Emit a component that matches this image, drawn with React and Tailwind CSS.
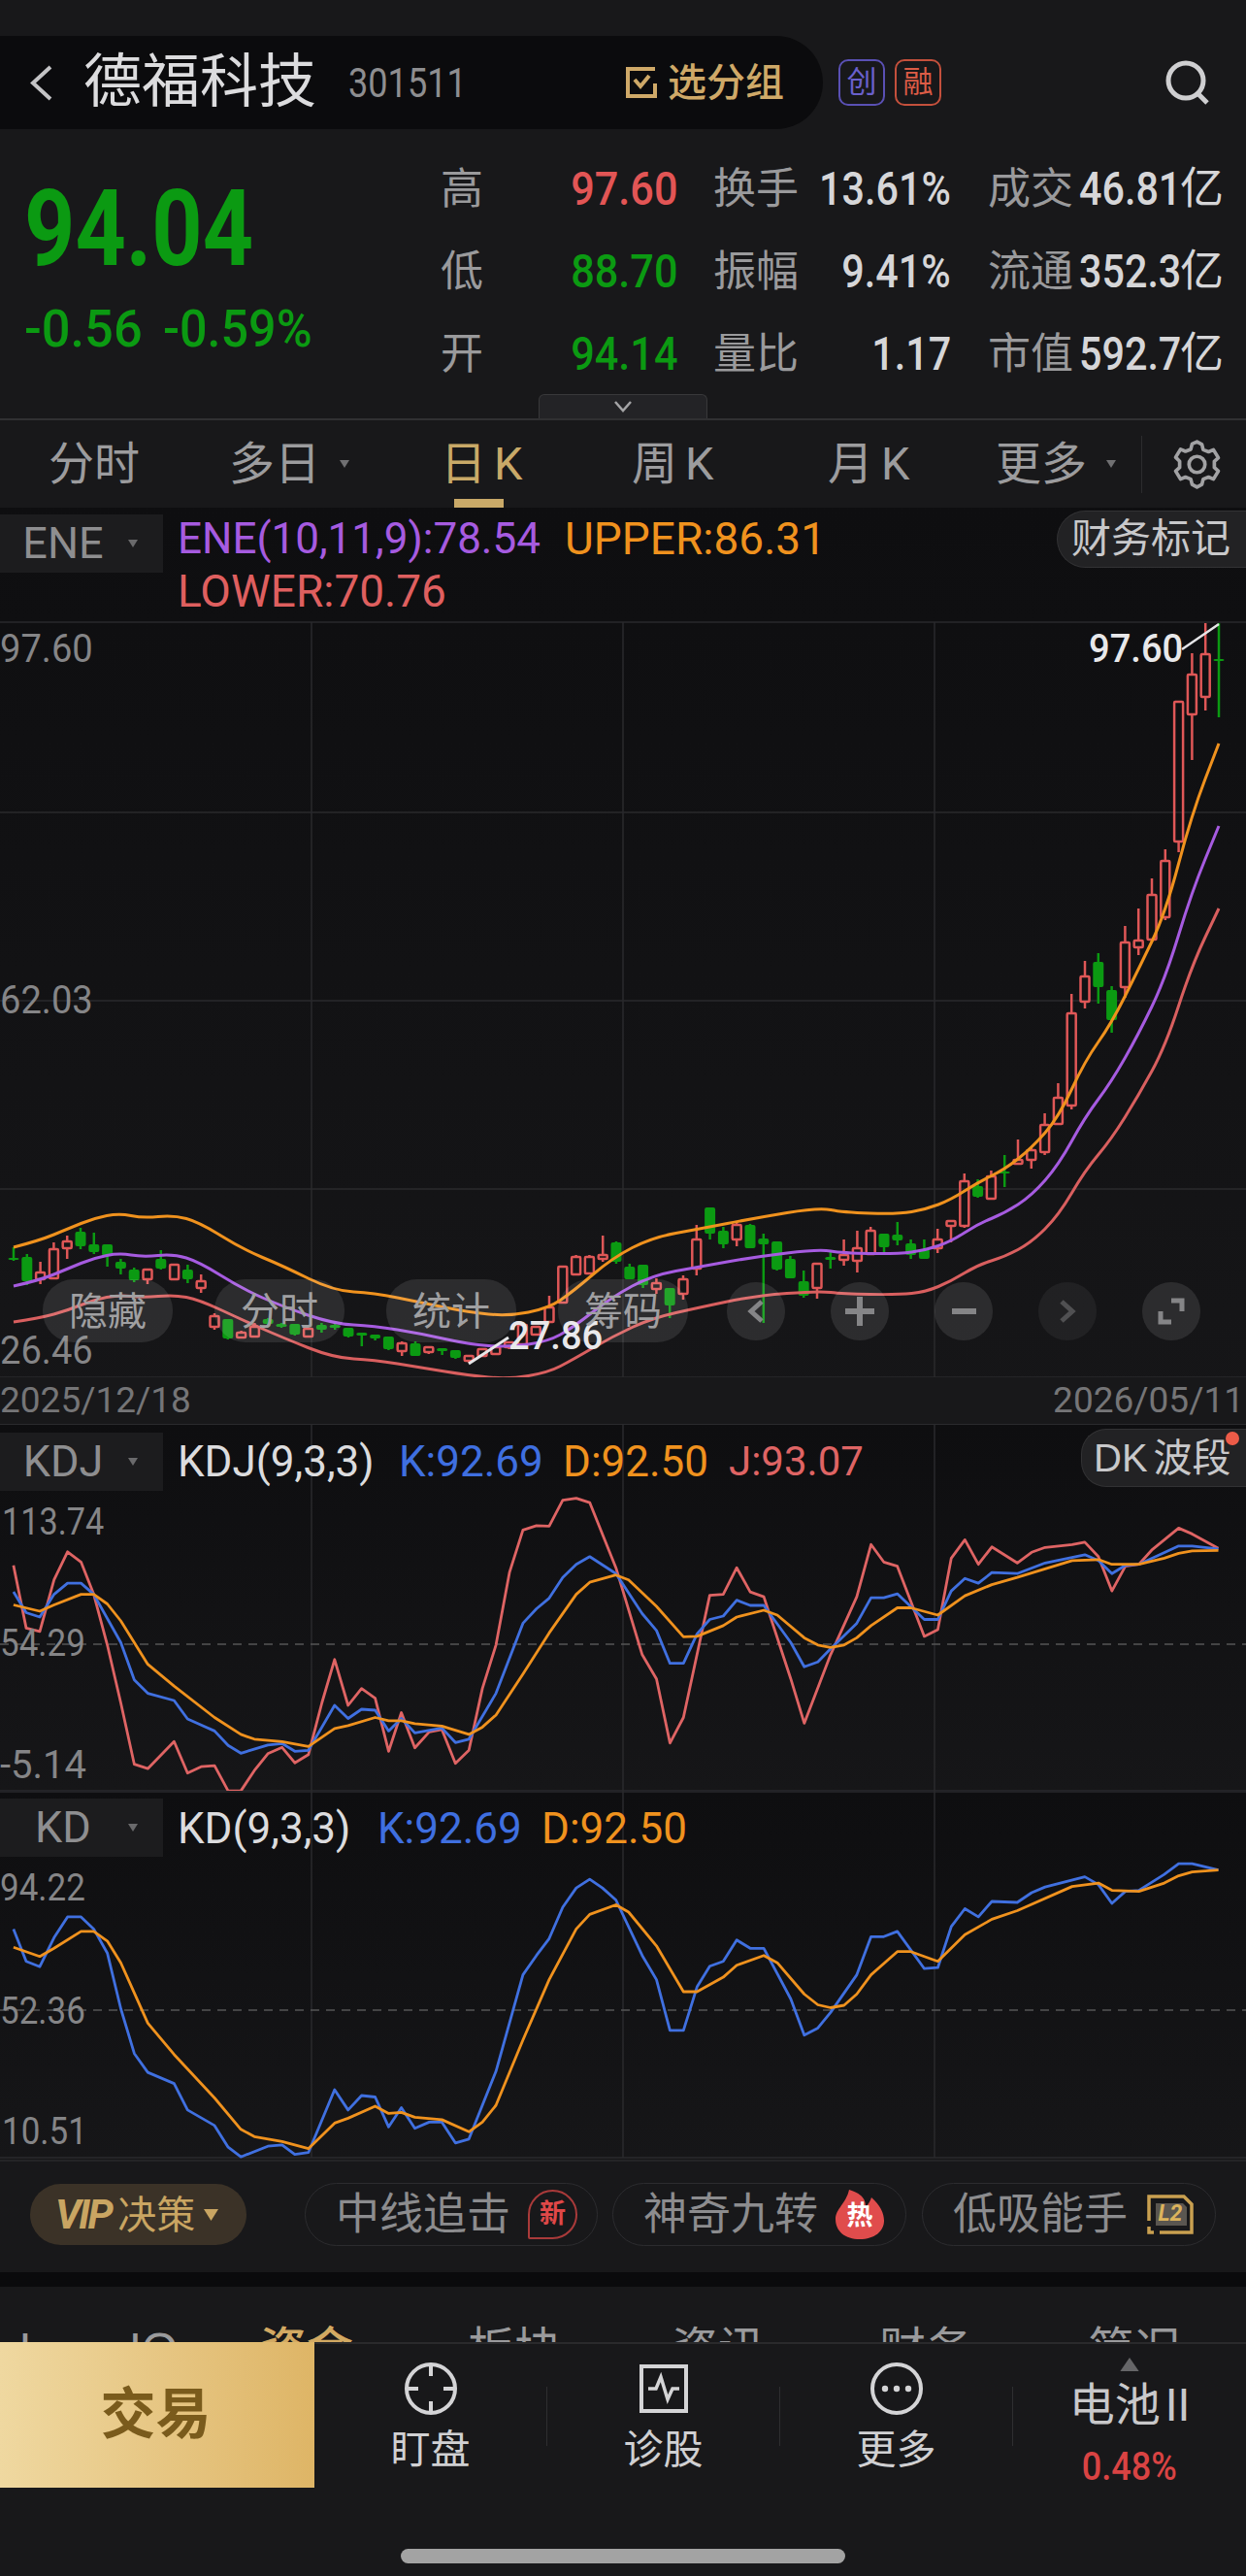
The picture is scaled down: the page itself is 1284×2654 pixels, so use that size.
import React from 'react';

const ROBOTO = "font-['Roboto','Liberation_Sans',sans-serif]";

// [high, bodyTop, bodyBottom, low, colour] in page pixels
const candles = [
  [1285,1296,1298,1299,'g'],[1292,1295,1320,1324,'g'],[1300,1311,1318,1323,'r'],[1280,1287,1317,1318,'r'],
  [1273,1279,1286,1297,'r'],[1265,1269,1284,1287,'g'],[1270,1282,1290,1292,'g'],[1282,1282,1294,1305,'g'],
  [1297,1300,1307,1313,'g'],[1306,1308,1319,1321,'g'],[1307,1308,1318,1323,'r'],[1288,1297,1307,1308,'g'],
  [1302,1303,1318,1319,'r'],[1303,1308,1318,1322,'g'],[1313,1320,1327,1332,'r'],[1353,1356,1367,1370,'r'],
  [1359,1359,1379,1380,'g'],[1371,1373,1378,1379,'r'],[1363,1367,1377,1378,'r'],[1358,1359,1364,1365,'g'],
  [1363,1364,1367,1368,'g'],[1364,1364,1375,1376,'g'],[1368,1369,1377,1378,'r'],[1363,1365,1370,1373,'g'],
  [1364,1365,1368,1370,'g'],[1368,1368,1377,1378,'g'],[1373,1373,1376,1387,'g'],[1375,1375,1379,1381,'g'],
  [1377,1377,1390,1391,'g'],[1382,1384,1392,1397,'r'],[1382,1384,1397,1397,'g'],[1388,1388,1393,1395,'r'],
  [1389,1389,1392,1396,'g'],[1391,1391,1399,1400,'g'],[1397,1397,1402,1404,'r'],[1390,1390,1397,1398,'r'],
  [1388,1388,1395,1396,'r'],[1383,1383,1388,1390,'r'],[1365,1365,1385,1386,'r'],[1367,1367,1375,1376,'r'],
  [1335,1347,1362,1363,'r'],[1305,1305,1342,1343,'r'],[1293,1295,1313,1314,'r'],[1293,1295,1312,1313,'r'],
  [1273,1293,1297,1300,'r'],[1279,1280,1300,1302,'g'],[1302,1305,1318,1318,'g'],[1303,1303,1324,1327,'g'],
  [1317,1322,1328,1333,'r'],[1327,1327,1345,1358,'g'],[1314,1318,1333,1339,'r'],[1262,1277,1307,1314,'r'],
  [1244,1244,1271,1277,'g'],[1264,1268,1282,1286,'g'],[1258,1262,1277,1284,'r'],[1261,1262,1286,1286,'g'],
  [1271,1276,1282,1363,'g'],[1279,1279,1308,1309,'g'],[1294,1297,1317,1317,'g'],[1309,1320,1335,1337,'g'],
  [1302,1302,1327,1338,'r'],[1290,1295,1298,1307,'g'],[1277,1293,1298,1304,'r'],[1268,1286,1299,1311,'r'],
  [1264,1268,1292,1292,'r'],[1271,1271,1285,1291,'g'],[1259,1272,1278,1283,'g'],[1277,1281,1293,1297,'g'],
  [1277,1287,1297,1297,'g'],[1266,1277,1286,1291,'r'],[1258,1258,1263,1280,'r'],[1209,1217,1263,1265,'r'],
  [1215,1222,1233,1234,'g'],[1206,1212,1235,1235,'r'],[1190,1207,1209,1223,'g'],[1174,1195,1199,1199,'r'],
  [1182,1185,1195,1204,'r'],[1147,1159,1187,1190,'r'],[1116,1131,1158,1159,'r'],[1024,1044,1139,1143,'r'],
  [990,1006,1032,1039,'r'],[982,991,1017,1034,'g'],[1016,1020,1051,1064,'g'],[954,971,1017,1028,'r'],
  [936,969,976,984,'r'],[905,922,968,970,'r'],[875,887,945,948,'r'],[723,723,867,878,'r'],
  [673,695,736,783,'r'],[642,674,718,732,'r'],[642,679,681,739,'g'],
];

const upper = [[14,1285],[41,1278],[70,1266],[97,1255],[123,1250],[147,1255],[179,1252],[205,1259],[250,1287],[291,1304],[344,1330],[385,1332],[434,1342],[483,1352],[524,1356],[565,1348],[590,1331],[631,1296],[672,1275],[721,1266],[778,1255],[844,1244],[868,1249],[925,1251],[954,1246],[980,1236],[1008,1218],[1035,1205],[1063,1183],[1091,1151],[1118,1093],[1145,1055],[1173,999],[1201,941],[1228,839],[1256,766]];
const mid = [[14,1325],[41,1319],[70,1307],[97,1296],[123,1291],[147,1295],[179,1292],[205,1300],[250,1328],[291,1346],[344,1364],[385,1366],[434,1374],[483,1385],[524,1388],[565,1382],[590,1368],[631,1336],[672,1314],[721,1305],[778,1295],[844,1287],[868,1291],[925,1292],[954,1288],[980,1279],[1008,1261],[1035,1250],[1063,1232],[1091,1200],[1118,1151],[1145,1115],[1173,1066],[1201,1008],[1228,919],[1256,851]];
const lower = [[14,1362],[41,1358],[70,1350],[97,1339],[123,1334],[147,1337],[179,1334],[205,1339],[250,1360],[291,1378],[344,1399],[385,1401],[434,1409],[483,1417],[524,1421],[565,1414],[590,1401],[631,1377],[672,1358],[721,1347],[778,1335],[844,1330],[868,1333],[925,1334],[954,1331],[980,1320],[1008,1303],[1035,1295],[1063,1280],[1091,1252],[1118,1206],[1145,1174],[1173,1129],[1201,1078],[1228,995],[1256,936]];

// read off the 1284 -> 1568 crop, turned into page pixels by toPage
const jLine = [[17,305],[33,435],[50,442],[68,335],[85,277],[102,298],[118,365],[135,470],[152,590],[169,717],[186,726],[219,670],[236,735],[253,722],[270,720],[287,772],[303,772],[320,730],[337,695],[355,682],[371,714],[388,697],[405,590],[421,500],[438,595],[455,560],[472,580],[489,690],[505,610],[522,683],[540,650],[556,645],[573,715],[590,688],[607,560],[624,470],[641,320],[658,232],[675,223],[691,224],[708,170],[725,166],[742,175],[775,310],[808,490],[826,540],[843,673],[860,620],[893,367],[910,365],[927,310],[944,360],[961,370],[995,540],[1012,632],[1045,490],[1078,370],[1096,262],[1112,298],[1129,307],[1163,452],[1180,438],[1197,290],[1214,252],[1231,303],[1248,267],[1280,300],[1298,278],[1315,268],[1349,262],[1365,257],[1382,287],[1399,358],[1416,307],[1433,303],[1450,272],[1483,228],[1500,240],[1533,270]];
const kLine = [[17,360],[33,403],[50,412],[68,365],[85,342],[102,342],[118,365],[152,465],[169,542],[186,570],[219,585],[236,623],[270,648],[287,678],[303,694],[337,677],[355,674],[371,690],[388,688],[421,595],[438,622],[455,603],[472,605],[489,648],[505,622],[522,652],[556,642],[573,672],[590,665],[624,570],[658,425],[675,395],[691,373],[708,330],[725,303],[742,287],[775,322],[808,405],[826,440],[843,508],[860,508],[877,447],[893,417],[910,410],[927,377],[944,388],[961,388],[995,465],[1012,515],[1029,505],[1045,478],[1078,425],[1096,372],[1112,372],[1129,364],[1163,417],[1180,417],[1197,358],[1214,332],[1231,342],[1248,320],[1280,322],[1315,300],[1365,283],[1382,295],[1399,322],[1416,305],[1433,303],[1483,265],[1500,265],[1533,271]];
const dLine = [[17,387],[50,400],[68,387],[102,365],[118,365],[135,385],[152,420],[186,510],[219,555],[270,620],[303,655],[320,665],[355,670],[388,680],[421,643],[438,637],[472,620],[489,627],[505,627],[522,633],[556,638],[590,655],[607,640],[624,615],[658,530],[691,445],[725,365],[742,340],[775,325],[791,335],[826,390],[860,453],[877,452],[910,430],[927,412],[961,398],[978,408],[1012,455],[1029,470],[1045,475],[1062,470],[1078,455],[1096,430],[1129,393],[1146,393],[1180,408],[1214,368],[1248,345],[1280,330],[1349,295],[1382,293],[1399,303],[1433,303],[1465,290],[1483,280],[1500,275],[1533,274]];
const k2Line = [[17,1060],[33,1127],[50,1138],[68,1078],[85,1035],[102,1035],[118,1060],[135,1110],[152,1225],[169,1318],[186,1357],[219,1380],[236,1435],[270,1467],[287,1512],[303,1532],[337,1510],[355,1507],[371,1527],[388,1523],[421,1393],[438,1435],[455,1405],[472,1408],[489,1470],[505,1430],[522,1473],[540,1460],[556,1460],[573,1503],[590,1495],[624,1355],[658,1155],[675,1115],[691,1080],[708,1015],[725,975],[742,957],[758,975],[775,1000],[808,1115],[826,1165],[843,1270],[860,1270],[877,1180],[893,1137],[910,1127],[927,1083],[944,1100],[961,1100],[995,1205],[1012,1280],[1029,1265],[1045,1233],[1078,1155],[1096,1076],[1112,1076],[1129,1065],[1163,1142],[1180,1140],[1197,1055],[1214,1018],[1231,1035],[1248,1003],[1280,1005],[1298,985],[1315,973],[1365,952],[1382,968],[1399,1007],[1416,982],[1433,980],[1465,947],[1483,925],[1500,925],[1533,938]];
const d2Line = [[17,1098],[50,1117],[68,1100],[102,1065],[118,1065],[135,1085],[152,1130],[186,1255],[219,1320],[270,1410],[303,1475],[320,1490],[355,1500],[388,1515],[421,1462],[438,1452],[472,1427],[489,1442],[505,1440],[522,1450],[556,1455],[590,1480],[607,1460],[624,1425],[658,1290],[691,1165],[725,1060],[742,1030],[775,1010],[791,1025],[826,1095],[860,1190],[877,1190],[910,1160],[927,1135],[961,1115],[978,1130],[1012,1195],[1029,1217],[1045,1223],[1062,1218],[1078,1195],[1096,1155],[1129,1107],[1146,1107],[1180,1127],[1214,1072],[1248,1040],[1280,1022],[1349,972],[1382,965],[1399,980],[1433,982],[1465,965],[1483,950],[1500,942],[1533,938]];

const toPage = (pts) => pts.map(([x, y]) => [x / 1.221, 1460 + y / 2.01]);
const poly = (pts) => pts.map((p) => p.map((n) => n.toFixed(1)).join(',')).join(' ');
const smooth = (pts) => {
  let d = `M${pts[0][0]} ${pts[0][1]}`;
  for (let i = 1; i < pts.length - 1; i++) {
    const mx = (pts[i][0] + pts[i + 1][0]) / 2;
    const my = (pts[i][1] + pts[i + 1][1]) / 2;
    d += ` Q${pts[i][0]} ${pts[i][1]} ${mx} ${my}`;
  }
  const last = pts[pts.length - 1];
  return d + ` L${last[0]} ${last[1]}`;
};

function Caret({ className = '' }) {
  return (
    <svg viewBox="0 0 10 8" className={`w-[10px] h-[8px] ${className}`}>
      <path d="M0 0H10L5 8Z" fill="currentColor" />
    </svg>
  );
}

function Candle({ c, i }) {
  const [h, t, b, l, col] = c;
  const x = 14 + 13.8 * i;
  if (col === 'g') {
    return (
      <g stroke="#0b9a12" fill="#0b9a12">
        <line x1={x} x2={x} y1={h} y2={l} strokeWidth="2.5" />
        <rect x={x - 5.5} y={t} width="11" height={Math.max(b - t, 2)} rx="2" strokeWidth="0" />
      </g>
    );
  }
  return (
    <g stroke="#df5757" fill="none" strokeWidth="2.5">
      <line x1={x} x2={x} y1={h} y2={t} />
      <line x1={x} x2={x} y1={b} y2={l} />
      <rect x={x - 4.5} y={t} width="9" height={Math.max(b - t, 2)} rx="1" />
    </g>
  );
}

function Grid({ hs = [], top, bottom }) {
  return (
    <g stroke="#2a2a2d" strokeWidth="1.5">
      {hs.map((y) => <line key={y} x1="0" x2="1284" y1={y} y2={y} />)}
      {[321, 642, 963].map((x) => <line key={x} x1={x} x2={x} y1={top} y2={bottom} />)}
    </g>
  );
}

function IndicatorTab({ name }) {
  return (
    <div className="w-[168px] h-[60px] bg-[#1c1c1e] flex items-center shrink-0">
      <span className={`w-[130px] text-center text-[45px] text-[#8e8e90] ${ROBOTO}`}>{name}</span>
      <Caret className="text-[#6a6a6c] ml-[2px]" />
    </div>
  );
}

function Chip({ label, children, className }) {
  return (
    <div className={`h-[65px] rounded-full border border-[#2c2c2f] flex items-center pl-[31px] text-[45px] text-[#8c8c8e] ${className}`}>
      <span className="w-[199px] shrink-0 whitespace-nowrap">{label}</span>
      {children}
    </div>
  );
}

function NavItem({ label, children }) {
  return (
    <>
      <div className="w-[239px] flex flex-col items-center pt-[19px]">
        <div className="h-[54px] flex items-center justify-center">{children}</div>
        <span className="mt-[14px] text-[41px] leading-[44px] text-[#d0d0d2]">{label}</span>
      </div>
      <div className="w-px h-[61px] mt-[44px] bg-[#2e2e30]" />
    </>
  );
}

export default function App() {
  const stats = [
    ['高', '97.60', 'text-[#e25555]', '换手', '13.61%', '成交', '46.81'],
    ['低', '88.70', 'text-[#0b9a12]', '振幅', '9.41%', '流通', '352.3'],
    ['开', '94.14', 'text-[#0b9a12]', '量比', '1.17', '市值', '592.7'],
  ];
  const tabs = [
    { name: '分时', w: 'w-[186px]' },
    { name: '多日', w: 'w-[218px]', caret: true },
    { w: 'w-[197px]', active: true },
    { name: '周', k: true, w: 'w-[202px]' },
    { name: '月', k: true, w: 'w-[173px]' },
    { name: '更多', w: 'w-[150px]', caret: true },
  ];

  return (
    <div className="w-[1284px] h-[2654px] overflow-hidden bg-[#18181a] text-[#ddd] font-['Liberation_Sans','Noto_Sans_CJK_SC',sans-serif]">
      {/* Title bar */}
      <div className="pt-[37px] flex items-center h-[133px]">
        <div className="w-[848px] h-[96px] bg-[#0b0b0d] rounded-r-[48px] flex items-center shrink-0">
          <svg viewBox="0 0 25 37" className="w-[25px] h-[37px] ml-[30px]" fill="none" stroke="#c4c4c6" strokeWidth="4">
            <path d="M22 2L4 18.5L22 35" />
          </svg>
          <span className="ml-[31px] text-[60px] leading-none text-[#dcdcde]">德福科技</span>
          <span className={`ml-[33px] text-[43px] text-[#8e8e90] inline-block origin-left scale-x-[.84] ${ROBOTO}`}>301511</span>
          <div className="ml-auto mr-[40px] flex items-center text-[#cfa968]">
            <svg viewBox="0 0 32 32" className="w-[32px] h-[32px]" fill="none" stroke="currentColor" strokeWidth="4">
              <path d="M30 2H2V30H30V17" />
              <path d="M9 13L15 20L24 9" />
            </svg>
            <span className="ml-[11px] text-[40px] font-medium">选分组</span>
          </div>
        </div>
        <div className="ml-[16px] w-[48px] h-[48px] rounded-[10px] border-2 border-[#5a50b4] flex items-center justify-center text-[31px] text-[#6a60cc]">创</div>
        <div className="ml-[10px] w-[48px] h-[48px] rounded-[10px] border-2 border-[#c4503c] flex items-center justify-center text-[31px] text-[#dc5c46]">融</div>
        <svg viewBox="0 0 46 46" className="ml-auto mr-[37px] w-[46px] h-[46px]" fill="none" stroke="#cfcfd1" strokeWidth="5">
          <circle cx="21" cy="21" r="18" />
          <path d="M33 34L43 44" />
        </svg>
      </div>

      {/* Quote */}
      <div className="relative h-[300px] flex border-b-2 border-[#303032]">
        <div className="w-[454px] pl-[25px] pt-[48px] shrink-0">
          <div className={`text-[110px] leading-[110px] font-bold text-[#0b9a12] origin-left scale-x-[.83] ${ROBOTO}`}>94.04</div>
          <div className={`mt-[21px] flex text-[54px] leading-[54px] font-medium text-[#0b9a12] ${ROBOTO}`}>
            <span className="w-[143px] origin-left scale-x-[.97]">-0.56</span>
            <span className="origin-left scale-x-[.93]">-0.59%</span>
          </div>
        </div>
        <div className="pt-[19px] grid grid-cols-[136px_108px_148px_134px_132px_120px] auto-rows-[85px] items-center">
          {stats.map((r) => (
            <React.Fragment key={r[0]}>
              <span className="text-[44px] text-[#9a9a9c]">{r[0]}</span>
              <span className={`justify-self-end text-[48px] font-medium whitespace-nowrap origin-right scale-x-[.9] ${r[2]} ${ROBOTO}`}>{r[1]}</span>
              <span className="pl-[37px] text-[44px] text-[#9a9a9c] whitespace-nowrap">{r[3]}</span>
              <span className={`justify-self-end text-[48px] font-medium text-[#d6d6d8] whitespace-nowrap origin-right scale-x-[.86] ${ROBOTO}`}>{r[4]}</span>
              <span className="pl-[38px] text-[44px] text-[#9a9a9c] whitespace-nowrap">{r[5]}</span>
              <span className="flex items-center whitespace-nowrap">
                <span className={`w-[104px] text-[48px] font-medium text-[#d6d6d8] origin-left scale-x-[.86] ${ROBOTO}`}>{r[6]}</span>
                <span className="text-[45px] text-[#d6d6d8]">亿</span>
              </span>
            </React.Fragment>
          ))}
        </div>
        <div className="absolute left-[555px] bottom-0 w-[174px] h-[25px] bg-[#232326] border border-b-0 border-[#38383a] rounded-t-[6px] flex items-center justify-center">
          <svg viewBox="0 0 20 12" className="w-[20px] h-[12px]" fill="none" stroke="#a4a4a6" strokeWidth="2.5">
            <path d="M2 1L10 10L18 1" />
          </svg>
        </div>
      </div>

      {/* Period tabs */}
      <div className="h-[90px] flex items-center pl-[50px] text-[47px] text-[#9c9c9e]">
        {tabs.map((t, i) => (
          <div key={i} className={`${t.w} relative h-full flex items-center shrink-0`}>
            {t.active ? (
              <>
                <span className="text-[#c9a968] whitespace-nowrap">日<span className={`ml-[8px] ${ROBOTO}`}>K</span></span>
                <span className="absolute left-[14px] bottom-0 w-[51px] h-[9px] bg-[#c9a968]" />
              </>
            ) : (
              <span className="whitespace-nowrap">{t.name}{t.k && <span className={`ml-[8px] ${ROBOTO}`}>K</span>}</span>
            )}
            {t.caret && <Caret className="ml-[20px] text-[#707072]" />}
          </div>
        ))}
        <div className="w-px h-[59px] bg-[#2c2c2e] shrink-0" />
        <svg viewBox="0 0 24 24" className="ml-[29px] w-[55px] h-[55px]" fill="none" stroke="#a2a2a4" strokeWidth="1.6" strokeLinejoin="round">
          <path d="M12 1.8l2.2 1.2.6 2.4 2.4.9 2.2-.9 2.2 3.6-1.8 1.6v2.8l1.8 1.6-2.2 3.6-2.2-.9-2.4.9-.6 2.4-2.2 1.2-2.2-1.2-.6-2.4-2.4-.9-2.2.9-2.2-3.6 1.8-1.6v-2.8L2.4 8.8l2.2-3.6 2.2.9 2.4-.9.6-2.4z" />
          <circle cx="12" cy="12" r="3.6" />
        </svg>
      </div>

      {/* Main chart */}
      <div className="relative h-[944px] bg-linear-to-b from-[#0e0e10] to-[#161618] flex flex-col">
        <svg viewBox="0 523 1284 944" className="absolute inset-0 w-[1284px] h-[944px]">
          <Grid hs={[641, 837, 1031, 1225, 1419]} top={641} bottom={1419} />
          {candles.map((c, i) => <Candle key={i} c={c} i={i} />)}
          <path d={smooth(lower)} fill="none" stroke="#d95f5f" strokeWidth="3" />
          <path d={smooth(mid)} fill="none" stroke="#a65be0" strokeWidth="3" />
          <path d={smooth(upper)} fill="none" stroke="#f0921e" strokeWidth="3" />
          <line x1="483" y1="1405" x2="524" y2="1378" stroke="#e6e6e8" strokeWidth="3" />
          <line x1="1218" y1="669" x2="1256" y2="643" stroke="#e6e6e8" strokeWidth="2.5" />
        </svg>

        <div className="relative h-[118px] flex items-start pt-[7px]">
          <IndicatorTab name="ENE" />
          <div className={`ml-[15px] -mt-[2px] leading-[54px] ${ROBOTO}`}>
            <div className="flex whitespace-nowrap">
              <span className="w-[399px] text-[44px] text-[#a65be0]">ENE(10,11,9):78.54</span>
              <span className="text-[46px] text-[#f0921e]">UPPER:86.31</span>
            </div>
            <div className="text-[46px] text-[#df5f5f]">LOWER:70.76</div>
          </div>
          <div className="ml-auto -mt-[4px] w-[195px] h-[59px] bg-[#222224] border border-r-0 border-[#323234] rounded-l-[30px] flex items-center pl-[14px] text-[41px] text-[#c8c8ca] whitespace-nowrap">财务标记</div>
        </div>

        <span className={`absolute left-0 top-[123px] text-[41px] leading-[44px] text-[#858587] origin-left scale-x-[.93] ${ROBOTO}`}>97.60</span>
        <span className={`absolute left-0 top-[485px] text-[41px] leading-[44px] text-[#858587] origin-left scale-x-[.93] ${ROBOTO}`}>62.03</span>
        <span className={`absolute left-0 top-[846px] text-[41px] leading-[44px] text-[#858587] origin-left scale-x-[.93] ${ROBOTO}`}>26.46</span>
        <span className={`absolute left-[1122px] top-[123px] text-[41px] leading-[44px] font-medium text-[#e8e8ea] origin-left scale-x-[.93] ${ROBOTO}`}>97.60</span>
        <span className={`absolute left-[524px] top-[831px] text-[41px] leading-[44px] font-medium text-[#e8e8ea] origin-left scale-x-[.93] ${ROBOTO}`}>27.86</span>

        {/* Chart overlay buttons */}
        <div className="absolute left-[44px] top-[795px] flex items-center text-[40px] text-[#a0a0a2]">
          <div className="flex gap-[43px]">
            {['隐藏', '分时', '统计', '筹码'].map((t) => (
              <div key={t} className="w-[134px] h-[65px] rounded-[32px] bg-white/10 flex items-center justify-center">{t}</div>
            ))}
          </div>
          <div className="ml-[40px] flex gap-[47px] text-[#858587]">
            <div className="w-[60px] h-[60px] rounded-full bg-white/10 flex items-center justify-center">
              <svg viewBox="0 0 18 24" className="w-[18px] h-[24px]" fill="none" stroke="currentColor" strokeWidth="5"><path d="M15 2L4 12L15 22" /></svg>
            </div>
            <div className="w-[60px] h-[60px] rounded-full bg-white/10 flex items-center justify-center">
              <svg viewBox="0 0 30 30" className="w-[30px] h-[30px]" fill="currentColor"><path d="M12 0H18V12H30V18H18V30H12V18H0V12H12Z" /></svg>
            </div>
            <div className="w-[60px] h-[60px] rounded-full bg-white/10 flex items-center justify-center">
              <div className="w-[25px] h-[6px] bg-current" />
            </div>
            <div className="w-[60px] h-[60px] rounded-full bg-white/5 flex items-center justify-center text-[#505052]">
              <svg viewBox="0 0 18 24" className="w-[18px] h-[24px]" fill="none" stroke="currentColor" strokeWidth="5"><path d="M3 2L14 12L3 22" /></svg>
            </div>
            <div className="w-[60px] h-[60px] rounded-full bg-white/10 flex items-center justify-center">
              <svg viewBox="0 0 28 28" className="w-[28px] h-[28px]" fill="none" stroke="currentColor" strokeWidth="5"><path d="M14 3H25V14" /><path d="M3 14V25H14" /></svg>
            </div>
          </div>
        </div>

        <div className={`relative mt-auto h-[48px] flex items-center justify-between pr-[2px] text-[37px] text-[#757577] bg-[#18181a] ${ROBOTO}`}>
          <span>2025/12/18</span>
          <span>2026/05/11</span>
        </div>
      </div>

      {/* KDJ */}
      <div className="relative h-[378px] bg-linear-to-b from-[#0e0e10] to-[#161618] border-t border-[#2a2a2d] box-border">
        <svg viewBox="0 1467 1284 378" className="absolute inset-0 w-[1284px] h-[378px]">
          <Grid hs={[1844]} top={1467} bottom={1845} />
          <line x1="0" x2="1284" y1="1693" y2="1693" stroke="#555" strokeWidth="1.5" strokeDasharray="9 7" />
          <polyline points={poly(toPage(jLine))} fill="none" stroke="#df6464" strokeWidth="2.8" strokeLinejoin="round" />
          <polyline points={poly(toPage(kLine))} fill="none" stroke="#4070e0" strokeWidth="2.8" strokeLinejoin="round" />
          <polyline points={poly(toPage(dLine))} fill="none" stroke="#f0921e" strokeWidth="2.8" strokeLinejoin="round" />
        </svg>
        <div className="relative flex items-start pt-[8px]">
          <IndicatorTab name="KDJ" />
          <div className={`ml-[15px] mt-[3px] flex text-[44px] leading-[54px] whitespace-nowrap ${ROBOTO}`}>
            <span className="w-[228px] text-[#dcdcde]">KDJ(9,3,3)</span>
            <span className="w-[169px] text-[#3f6fe0]">K:92.69</span>
            <span className="w-[171px] text-[#f0921e]">D:92.50</span>
            <span className="text-[42px] text-[#df6464]">J:93.07</span>
          </div>
          <div className="relative ml-auto -mt-[4px] w-[170px] h-[60px] bg-[#222224] border border-r-0 border-[#323234] rounded-l-[26px] flex items-center pl-[12px] text-[40px] text-[#c8c8ca] whitespace-nowrap">
            DK<span className="ml-[6px]">波段</span>
            <span className="absolute right-[7px] top-[2px] w-[14px] h-[14px] rounded-full bg-[#ec5b48]" />
          </div>
        </div>
        <span className={`absolute left-[2px] top-[78px] text-[38px] leading-[44px] text-[#858587] origin-left scale-x-[.9] ${ROBOTO}`}>113.74</span>
        <span className={`absolute left-0 top-[203px] text-[38px] leading-[44px] text-[#858587] origin-left scale-x-[.92] ${ROBOTO}`}>54.29</span>
        <span className={`absolute left-0 top-[329px] text-[40px] leading-[44px] text-[#858587] ${ROBOTO}`}>-5.14</span>
      </div>

      {/* KD */}
      <div className="relative h-[380px] bg-linear-to-b from-[#0e0e10] to-[#161618]">
        <svg viewBox="0 1845 1284 380" className="absolute inset-0 w-[1284px] h-[380px]">
          <Grid hs={[1846, 2223]} top={1845} bottom={2223} />
          <line x1="0" x2="1284" y1="2071" y2="2071" stroke="#555" strokeWidth="1.5" strokeDasharray="9 7" />
          <polyline points={poly(toPage(k2Line))} fill="none" stroke="#4070e0" strokeWidth="2.8" strokeLinejoin="round" />
          <polyline points={poly(toPage(d2Line))} fill="none" stroke="#f0921e" strokeWidth="2.8" strokeLinejoin="round" />
        </svg>
        <div className="relative flex items-start pt-[8px]">
          <IndicatorTab name="KD" />
          <div className={`ml-[15px] mt-[4px] flex text-[44px] leading-[54px] whitespace-nowrap ${ROBOTO}`}>
            <span className="w-[206px] text-[#dcdcde]">KD(9,3,3)</span>
            <span className="w-[169px] text-[#3f6fe0]">K:92.69</span>
            <span className="text-[#f0921e]">D:92.50</span>
          </div>
        </div>
        <span className={`absolute left-0 top-[78px] text-[38px] leading-[44px] text-[#858587] origin-left scale-x-[.92] ${ROBOTO}`}>94.22</span>
        <span className={`absolute left-0 top-[205px] text-[38px] leading-[44px] text-[#858587] origin-left scale-x-[.92] ${ROBOTO}`}>52.36</span>
        <span className={`absolute left-[2px] top-[329px] text-[38px] leading-[44px] text-[#858587] origin-left scale-x-[.92] ${ROBOTO}`}>10.51</span>
      </div>

      {/* Strategy chips */}
      <div className="h-[116px] border-t-2 border-[#242426] box-border flex items-center pl-[31px] pb-[5px]">
        <div className="w-[223px] h-[63px] rounded-full bg-[#3b3227] flex items-center pl-[26px] text-[#c9a562] shrink-0">
          <span className={`text-[42px] font-bold italic tracking-[-2.5px] ${ROBOTO}`}>VIP</span>
          <span className="ml-[7px] text-[40px] whitespace-nowrap">决策</span>
          <Caret className="ml-[9px] !w-[15px] !h-[12px]" />
        </div>
        <Chip label="中线追击" className="ml-[60px] w-[302px] shrink-0">
          <div className="ml-[-1px] w-[51px] h-[51px] rounded-[50%_50%_50%_2px] border-2 border-[#a93a3a] flex items-center justify-center text-[27px] font-bold text-[#e04848]">新</div>
        </Chip>
        <Chip label="神奇九转" className="ml-[15px] w-[303px] shrink-0">
          <div className="relative ml-[-1px] w-[50px] h-[51px] flex items-center justify-center">
            <svg viewBox="0 0 50 51" className="absolute inset-0 w-[50px] h-[51px]">
              <path d="M14 0C30 5 31 12 31 18C34 15 36 11 37 8C46 16 50 24 50 32C50 43 40 51 25 51C10 51 0 43 0 30C0 20 11 14 14 0Z" fill="#e04c4c" />
            </svg>
            <span className="relative mt-[4px] text-[27px] font-bold text-white">热</span>
          </div>
        </Chip>
        <Chip label="低吸能手" className="ml-[16px] w-[303px] shrink-0">
          <div className="relative ml-[1px] w-[48px] h-[41px] flex items-center justify-center">
            <svg viewBox="0 0 48 41" className="absolute inset-0 w-[48px] h-[41px]" fill="none" stroke="#c9a050" strokeWidth="3.5">
              <path d="M2 27V2H38L46 10V39H13" />
              <path d="M2 33V39H7" />
              <path d="M9 9H37L41 13V32H9Z" fill="#5a5650" stroke="none" />
            </svg>
            <span className={`relative text-[23px] font-bold italic text-[#dcb35c] ${ROBOTO}`}>L2</span>
          </div>
        </Chip>
      </div>
      <div className="h-[15px] bg-[#0a0a0c]" />

      {/* Lower tab strip, mostly under the nav */}
      <div className="h-[57px] overflow-hidden flex pt-[37px] text-[48px] leading-[56px] text-[#9a9a9c] whitespace-nowrap">
        <div className="w-[66px] text-center">L</div>
        <div className="w-[184px] text-center">IO</div>
        <div className="w-[132px] text-center text-[#d2a962] font-medium flex justify-center">资金</div>
        <div className="w-[296px] flex justify-center">板块</div>
        <div className="w-[124px] flex justify-center">资讯</div>
        <div className="w-[304px] flex justify-center">财务</div>
        <div className="w-[126px] flex justify-center">简况</div>
      </div>

      {/* Bottom nav */}
      <div className="h-[150px] flex border-t-2 border-[#2a2a2c] box-border">
        <div className="w-[324px] -mt-[2px] h-[150px] bg-linear-to-r from-[#efd8a0] to-[#deb566] flex items-center justify-center pr-[3px] text-[57px] font-bold text-[#7a5b1c] shrink-0">交易</div>
        <NavItem label="盯盘">
          <svg viewBox="0 0 54 54" className="w-[54px] h-[54px]" fill="none" stroke="#d4d4d6" strokeWidth="4">
            <circle cx="27" cy="27" r="25" />
            <path d="M27 2V14M27 40V52M2 27H14M40 27H52" />
          </svg>
        </NavItem>
        <NavItem label="诊股">
          <svg viewBox="0 0 50 50" className="w-[50px] h-[50px]" fill="none" stroke="#d4d4d6" strokeWidth="4">
            <rect x="2" y="2" width="46" height="46" />
            <path d="M9 25H17L22 13L29 36L34 25H41" strokeWidth="3.5" />
          </svg>
        </NavItem>
        <NavItem label="更多">
          <svg viewBox="0 0 54 54" className="w-[54px] h-[54px]">
            <circle cx="27" cy="27" r="25" fill="none" stroke="#d4d4d6" strokeWidth="4" />
            <circle cx="15" cy="27" r="3.2" fill="#d4d4d6" />
            <circle cx="27" cy="27" r="3.2" fill="#d4d4d6" />
            <circle cx="39" cy="27" r="3.2" fill="#d4d4d6" />
          </svg>
        </NavItem>
        <div className="flex-1 flex flex-col items-center pt-[14px]">
          <svg viewBox="0 0 22 16" className="w-[22px] h-[16px]"><path d="M11 0L22 16H0Z" fill="#666668" /></svg>
          <span className="mt-[7px] text-[47px] leading-[56px] text-[#c8c8ca] whitespace-nowrap">电池<span className={`ml-[5px] ${ROBOTO}`}>II</span></span>
          <span className={`mt-[13px] text-[41px] leading-[44px] font-medium text-[#d94343] scale-x-[.88] ${ROBOTO}`}>0.48%</span>
        </div>
      </div>

      {/* Home indicator */}
      <div className="mt-[63px] mx-auto w-[458px] h-[15px] rounded-full bg-[#a3a3a3]" />
    </div>
  );
}
